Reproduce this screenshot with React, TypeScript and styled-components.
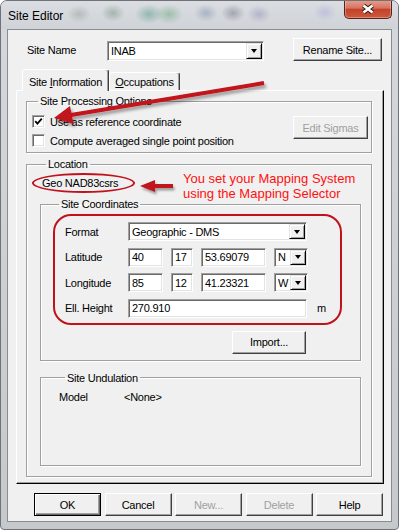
import React from 'react';
import styled, { createGlobalStyle } from 'styled-components';

const GlobalStyle = createGlobalStyle`
  html, body { margin: 0; padding: 0; background: #fff; }
  * { box-sizing: border-box; }
`;

const UI_FONT = `"Liberation Sans", Arial, sans-serif`;
const ANNOT = '#c1121c';

const Window = styled.div`
  position: relative;
  width: 399px;
  height: 530px;
  display: flex;
  flex-direction: column;
  background: linear-gradient(180deg, #d4d8dc 0%, #cfd2d5 40%, #c6c9cc 100%);
  border: 1px solid #6f7378;
  border-radius: 7px 7px 4px 4px;
  font-family: ${UI_FONT};
  font-size: 11px;
  letter-spacing: -0.25px;
  color: #000;
  overflow: hidden;
`;

const TitleBar = styled.div`
  height: 28px;
  flex: none;
  display: flex;
  align-items: flex-start;
  padding-left: 7px;
  background:
    radial-gradient(ellipse 12px 9px at 78px 13px, rgba(110, 120, 110, 0.3), transparent),
    radial-gradient(ellipse 12px 9px at 112px 12px, rgba(80, 110, 90, 0.35), transparent),
    radial-gradient(ellipse 14px 10px at 148px 13px, rgba(50, 130, 110, 0.4), transparent),
    radial-gradient(ellipse 14px 10px at 168px 13px, rgba(60, 140, 80, 0.35), transparent),
    radial-gradient(ellipse 12px 9px at 205px 12px, rgba(90, 110, 150, 0.35), transparent),
    radial-gradient(ellipse 12px 9px at 232px 12px, rgba(70, 70, 90, 0.35), transparent),
    radial-gradient(ellipse 12px 9px at 258px 13px, rgba(120, 110, 170, 0.35), transparent),
    radial-gradient(ellipse 12px 9px at 324px 11px, rgba(140, 140, 215, 0.3), transparent),
    linear-gradient(180deg, #dadee2, #cfd3d7);
`;

const Title = styled.div`
  margin-top: 7px;
  font-size: 12px;
  line-height: 16px;
  letter-spacing: 0;
`;

const CloseButton = styled.div`
  margin-left: auto;
  margin-right: 6px;
  margin-top: -1px;
  width: 48px;
  height: 19px;
  display: flex;
  align-items: center;
  justify-content: center;
  border: 1px solid #5a2218;
  border-top: none;
  border-radius: 0 0 5px 5px;
  background: linear-gradient(180deg, #e6a190 0%, #d8735f 45%, #c4412b 52%, #cc5a3c 100%);
  box-shadow: inset 0 0 0 1px rgba(255, 255, 255, 0.3);
`;

const Client = styled.div`
  flex: 1;
  margin: 0 6px 7px 6px;
  background: #f0f0f0;
  border: 1px solid #8a8d90;
  display: flex;
  flex-direction: column;
`;

const TopRow = styled.div`
  display: flex;
  align-items: center;
  height: 31px;
  padding: 8px 9px 0 19px;
`;

const Label = styled.span<{ $w?: number }>`
  flex: none;
  width: ${p => (p.$w ? `${p.$w}px` : 'auto')};
  white-space: nowrap;
`;

const Sunken = styled.div<{ $w: number; $h?: number; $mt?: number }>`
  flex: none;
  width: ${p => p.$w}px;
  height: ${p => p.$h ?? 19}px;
  margin-top: ${p => p.$mt ?? 0}px;
  background: #fff;
  border: 1px solid;
  border-color: #a0a0a0 #fff #fff #a0a0a0;
  box-shadow: inset 1px 1px 0 #696969, inset -1px -1px 0 #e3e3e3;
  display: flex;
  align-items: center;
  padding: 1px 1px 1px 3px;
  white-space: nowrap;
`;

const Value = styled.span`
  flex: 1;
  overflow: hidden;
`;

const DropButton = styled.span`
  flex: none;
  width: 16px;
  height: 100%;
  display: flex;
  align-items: center;
  justify-content: center;
  background: #f0f0f0;
  border: 1px solid;
  border-color: #e3e3e3 #000 #000 #e3e3e3;
  box-shadow: inset 1px 1px 0 #fff, inset -1px -1px 0 #a0a0a0;
`;

const DropArrow = styled.span`
  width: 0;
  height: 0;
  border-left: 3.5px solid transparent;
  border-right: 3.5px solid transparent;
  border-top: 4px solid #000;
`;

const Button = styled.button<{ $w: number; $default?: boolean; $push?: boolean }>`
  flex: none;
  width: ${p => p.$w}px;
  height: 23px;
  margin-left: ${p => (p.$push ? 'auto' : '0')};
  padding: 0;
  font-family: inherit;
  font-size: 11px;
  letter-spacing: inherit;
  color: ${p => (p.disabled ? '#a0a0a0' : '#000')};
  background: #f0f0f0;
  border: 1px solid;
  border-color: ${p => (p.$default ? '#000' : '#fff #404040 #404040 #fff')};
  box-shadow: ${p =>
    p.$default
      ? 'inset 1px 1px 0 #fff, inset -1px -1px 0 #696969, inset -2px -2px 0 #a0a0a0'
      : 'inset -1px -1px 0 #a0a0a0'};
`;

const TabStrip = styled.div`
  display: flex;
  align-items: flex-end;
  height: 21px;
  margin: 8px 0 0 14px;
  position: relative;
  z-index: 1;
`;

const Tab = styled.div<{ $w: number; $active?: boolean }>`
  width: ${p => p.$w}px;
  height: ${p => (p.$active ? 22 : 18)}px;
  margin-bottom: ${p => (p.$active ? -1 : 0)}px;
  padding-top: ${p => (p.$active ? 2 : 1)}px;
  display: flex;
  justify-content: center;
  align-items: center;
  background: #f0f0f0;
  border: 1px solid;
  border-bottom: none;
  border-color: #fff #404040 transparent #fff;
  border-radius: 3px 3px 0 0;
  box-shadow: inset -1px 0 0 #a0a0a0;
`;

const Panel = styled.div`
  height: 394px;
  margin: 0 7px 0 8px;
  padding: 3px 11px 9px 9px;
  border: 1px solid;
  border-color: #fff #000 #000 #fff;
  box-shadow: inset -1px -1px 0 #a0a0a0;
  display: flex;
  flex-direction: column;
`;

const Group = styled.fieldset<{ $grow?: boolean; $h?: number; $mt?: number; $pad: string }>`
  margin: ${p => p.$mt ?? 0}px 0 0 0;
  padding: ${p => p.$pad};
  min-width: 0;
  height: ${p => (p.$h ? `${p.$h}px` : 'auto')};
  border: 1px solid #a0a0a0;
  box-shadow: inset 1px 1px 0 #fff, 1px 1px 0 #fff;
  flex: ${p => (p.$grow ? 1 : 'none')};
  display: flex;
  flex-direction: column;
`;

const GroupTitle = styled.legend`
  margin-left: 6px;
  padding: 0 2px;
  line-height: 14px;
`;

const OptionsBody = styled.div`
  display: flex;
  align-items: flex-start;
`;

const CheckList = styled.div`
  display: flex;
  flex-direction: column;
`;

const CheckRow = styled.div`
  height: 19px;
  display: flex;
  align-items: center;
  gap: 5px;
`;

const CheckBox = styled.span`
  flex: none;
  width: 13px;
  height: 13px;
  background: #fff;
  border: 1px solid;
  border-color: #a0a0a0 #fff #fff #a0a0a0;
  box-shadow: inset 1px 1px 0 #696969, inset -1px -1px 0 #e3e3e3;
  display: flex;
  align-items: center;
  justify-content: center;
`;

const SideButton = styled.div`
  margin: 4px 0 0 auto;
`;

const LocationRow = styled.div`
  height: 25px;
  margin-left: -8px;
  display: flex;
  align-items: flex-start;
`;

const Ellipse = styled.div`
  flex: none;
  width: 103px;
  height: 20px;
  margin-top: 1px;
  padding-left: 8px;
  display: flex;
  align-items: center;
  border: 2px solid ${ANNOT};
  border-radius: 50%;
`;

const ArrowIcon = styled.svg`
  flex: none;
  margin: 2px 0 0 4px;
  overflow: visible;
`;

const Note = styled.div`
  margin: -1px 0 0 8px;
  font-size: 13px;
  line-height: 15px;
  letter-spacing: 0;
  color: #ff1010;
  white-space: nowrap;
`;

const Highlight = styled.div`
  margin-top: 2px;
  padding: 6px 0 5px 10px;
  border: 2px solid ${ANNOT};
  border-radius: 18px;
  display: flex;
  flex-direction: column;
  gap: 6.5px;
`;

const CoordRow = styled.div`
  height: 19px;
  display: flex;
  align-items: center;
`;

const Fields = styled.div`
  display: flex;
  align-items: center;
  gap: 8px;
`;

const Unit = styled.span`
  margin-left: 10px;
`;

const ImportRow = styled.div`
  display: flex;
  justify-content: flex-end;
  margin-top: 6px;
  padding-right: 36px;
`;

const ModelRow = styled.div`
  display: flex;
  line-height: 14px;
`;

const Footer = styled.div`
  display: flex;
  justify-content: flex-end;
  gap: 3.5px;
  margin-top: 9px;
  padding-right: 8px;
`;

const Overlay = styled.svg`
  position: absolute;
  left: 0;
  top: 0;
  pointer-events: none;
`;

function Combo({ w, h, mt, value }: { w: number; h?: number; mt?: number; value: string }) {
  return (
    <Sunken $w={w} $h={h} $mt={mt}>
      <Value>{value}</Value>
      <DropButton>
        <DropArrow />
      </DropButton>
    </Sunken>
  );
}

function Check({ checked, label }: { checked?: boolean; label: string }) {
  return (
    <CheckRow>
      <CheckBox>
        {checked && (
          <svg width="9" height="9" viewBox="0 0 9 9">
            <polyline points="1.2,4.2 3.4,6.6 7.8,1.6" fill="none" stroke="#000" strokeWidth="1.8" />
          </svg>
        )}
      </CheckBox>
      <span>{label}</span>
    </CheckRow>
  );
}

export default function App() {
  return (
    <>
      <GlobalStyle />
      <Window>
        <TitleBar>
          <Title>Site Editor</Title>
          <CloseButton>
            <svg width="16" height="12" viewBox="0 0 16 12">
              <path d="M3.5 2.5 L12.5 9.5 M12.5 2.5 L3.5 9.5" stroke="#3b1c16" strokeWidth="4.6" />
              <path d="M3.5 2.5 L12.5 9.5 M12.5 2.5 L3.5 9.5" stroke="#fff" strokeWidth="2.6" />
            </svg>
          </CloseButton>
        </TitleBar>

        <Client>
          <TopRow>
            <Label $w={80}>Site Name</Label>
            <Combo w={157} h={20} mt={3} value="INAB" />
            <Button $w={89} $push>Rename Site...</Button>
          </TopRow>

          <TabStrip>
            <Tab $w={87} $active>
              Site&nbsp;<u>I</u>nformation
            </Tab>
            <Tab $w={71}>
              <u>O</u>ccupations
            </Tab>
          </TabStrip>

          <Panel>
            <Group $pad="4px 3px 2px 5px">
              <GroupTitle>Site Processing Options</GroupTitle>
              <OptionsBody>
                <CheckList>
                  <Check checked label="Use as reference coordinate" />
                  <Check label="Compute averaged single point position" />
                </CheckList>
                <SideButton>
                  <Button $w={75} disabled>Edit Sigmas</Button>
                </SideButton>
              </OptionsBody>
            </Group>

            <Group $grow $mt={4} $pad="1px 10px 10px 13px">
              <GroupTitle>Location</GroupTitle>
              <LocationRow>
                <Ellipse>Geo NAD83csrs</Ellipse>
                <ArrowIcon width="36" height="20" viewBox="0 0 36 20">
                  <defs>
                    <filter id="shadowSmall" x="-30%" y="-50%" width="160%" height="220%">
                      <feDropShadow dx="1.5" dy="2.5" stdDeviation="1.3" floodColor="#000" floodOpacity="0.35" />
                    </filter>
                  </defs>
                  <g filter="url(#shadowSmall)" fill={ANNOT} stroke="none">
                    <rect x="13" y="10" width="21" height="4" />
                    <polygon points="1,12 16,6 16,18" />
                  </g>
                </ArrowIcon>
                <Note>
                  You set your Mapping System
                  <br />
                  using the Mapping Selector
                </Note>
              </LocationRow>

              <Group $pad="1px 18px 6px 12px">
                <GroupTitle>Site Coordinates</GroupTitle>
                <Highlight>
                  <CoordRow>
                    <Label $w={63}>Format</Label>
                    <Combo w={179} value="Geographic - DMS" />
                  </CoordRow>
                  <CoordRow>
                    <Label $w={63}>Latitude</Label>
                    <Fields>
                      <Sunken $w={35}>40</Sunken>
                      <Sunken $w={22}>17</Sunken>
                      <Sunken $w={65}>53.69079</Sunken>
                      <Combo w={34} value="N" />
                    </Fields>
                  </CoordRow>
                  <CoordRow>
                    <Label $w={63}>Longitude</Label>
                    <Fields>
                      <Sunken $w={35}>85</Sunken>
                      <Sunken $w={22}>12</Sunken>
                      <Sunken $w={65}>41.23321</Sunken>
                      <Combo w={34} value="W" />
                    </Fields>
                  </CoordRow>
                  <CoordRow>
                    <Label $w={63}>Ell. Height</Label>
                    <Sunken $w={179}>270.910</Sunken>
                    <Unit>m</Unit>
                  </CoordRow>
                </Highlight>
                <ImportRow>
                  <Button $w={74}>Import...</Button>
                </ImportRow>
              </Group>

              <Group $h={95} $mt={10} $pad="5px 10px 0 18px">
                <GroupTitle>Site Undulation</GroupTitle>
                <ModelRow>
                  <Label $w={65}>Model</Label>
                  <span>&lt;None&gt;</span>
                </ModelRow>
              </Group>
            </Group>
          </Panel>

          <Footer>
            <Button $w={67} $default>OK</Button>
            <Button $w={67}>Cancel</Button>
            <Button $w={67} disabled>New...</Button>
            <Button $w={67} disabled>Delete</Button>
            <Button $w={67}>Help</Button>
          </Footer>
        </Client>

        <Overlay width="399" height="530" viewBox="0 0 399 530">
          <defs>
            <filter id="shadowLarge" x="-10%" y="-50%" width="120%" height="220%">
              <feDropShadow dx="2" dy="3" stdDeviation="1.5" floodColor="#000" floodOpacity="0.35" />
            </filter>
          </defs>
          <g filter="url(#shadowLarge)" fill={ANNOT}>
            <line x1="263" y1="82" x2="70" y2="114" stroke={ANNOT} strokeWidth="4" />
            <polygon points="53,117 72.5,123 69,105" />
          </g>
        </Overlay>
      </Window>
    </>
  );
}
